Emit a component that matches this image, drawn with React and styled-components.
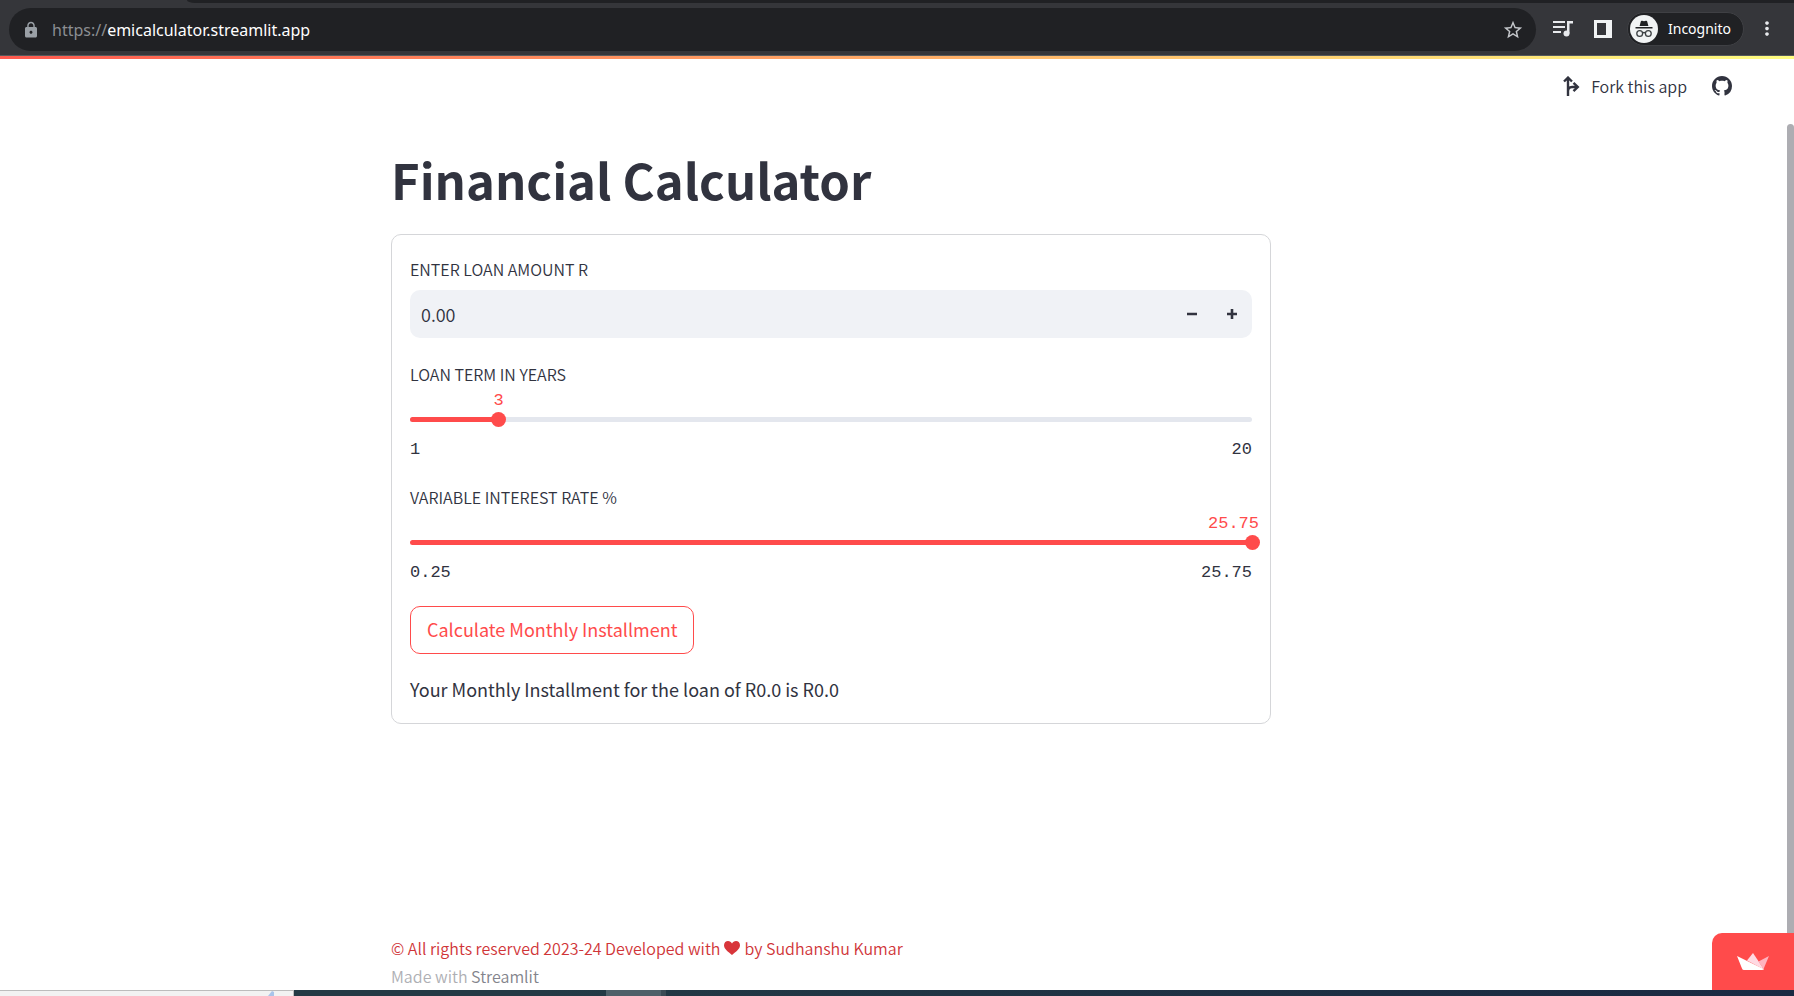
import React, { useState } from "react";
import styled, { createGlobalStyle } from "styled-components";
import { MdLock, MdStarBorder, MdMoreVert } from "react-icons/md";

const sans = `"Noto Sans CJK SC", "Noto Sans", sans-serif`;
const mono = `"Liberation Mono", monospace`;
const ui = `"Noto Sans", "Open Sans", sans-serif`;
const ink = "#31333f";
const red = "#ff4b4b";

const Global = createGlobalStyle`
  *, *::before, *::after { box-sizing: border-box; }
  body { margin: 0; background: #fff; color: ${ink}; font: 350 16px/28px ${sans}; }
  button, input { font: inherit; color: inherit; margin: 0; }
  button { cursor: pointer; }
`;

const Page = styled.div`
  min-height: 100vh;
  display: flex;
  flex-direction: column;
`;

const TabStrip = styled.div`
  height: 3px;
  background: #35363a;
  padding-left: 187px;
  &::before {
    content: "";
    display: block;
    height: 3px;
    background: #202124;
    border-bottom-left-radius: 8px 3px;
  }
`;

const Toolbar = styled.div`
  height: 53px;
  padding: 5px 16px 4px 9px;
  display: flex;
  align-items: flex-start;
  background: #35363a;
  border-bottom: 1px solid #55595b;
`;

const AddressBar = styled.div`
  flex: 1;
  height: 43px;
  padding: 0 12px 0 13px;
  display: flex;
  align-items: center;
  gap: 12px;
  border-radius: 22px;
  background: #202124;
  color: #9aa0a6;
`;

const Url = styled.div`
  flex: 1;
  font: 16px/24px ${ui};
  color: #8b8e92;
`;

const Host = styled.span`
  color: #fff;
`;

const ToolButton = styled.button`
  display: flex;
  align-items: center;
  justify-content: center;
  width: 22px;
  height: 24px;
  padding: 0;
  border: 0;
  background: none;
  color: ${(p) => p.$tone || "#e8eaed"};
`;

const Tools = styled.div`
  height: 41px;
  display: flex;
  align-items: center;
  padding-left: 16px;
`;

const PanelGap = styled.div`
  padding: 0 13px 0 18px;
  display: flex;
`;

const Incognito = styled.div`
  height: 34px;
  width: 117px;
  margin-right: 12px;
  padding: 0 2px;
  display: flex;
  align-items: center;
  gap: 10px;
  border: 1px solid #3f4044;
  border-radius: 17px;
  background: #202124;
  color: #fff;
  font: 14px/20px ${ui};
`;

const Viewport = styled.div`
  position: relative;
  flex: 1;
  display: flex;
  flex-direction: column;
`;

const Header = styled.header`
  height: 60px;
  padding: 0 62px 1px 0;
  display: flex;
  align-items: center;
  justify-content: flex-end;
  gap: 25px;
  background: linear-gradient(90deg, #ff5a4f, #fffd80) top / 100% 3px no-repeat;
`;

const HeaderLink = styled.a`
  display: flex;
  align-items: center;
  gap: 11px;
  color: ${ink};
  text-decoration: none;
`;

const Scroller = styled.div`
  flex: 1;
  display: flex;
  align-items: stretch;
`;

const ScrollTrack = styled.div`
  width: 7px;
  padding-top: 8px;
  display: flex;
`;

const ScrollThumb = styled.div`
  flex: 1;
  border-radius: 4px 4px 0 0;
  background: #adadb2;
`;

const Content = styled.div`
  flex: 1;
  display: grid;
  grid-template-columns: minmax(16px, 391fr) minmax(0, 880px) minmax(16px, 516fr);
`;

const Column = styled.main`
  grid-column: 2;
  display: flex;
  flex-direction: column;
  padding-top: 31px;
`;

const Title = styled.h1`
  margin: 0 0 23px;
  font-size: 49px;
  line-height: 64px;
  font-weight: 700;
`;

const Card = styled.form`
  display: flex;
  flex-direction: column;
  gap: 22px;
  padding: 20px 18px 19px;
  border: 1px solid #d5d6d9;
  border-radius: 10px;
`;

const Field = styled.div`
  display: flex;
  flex-direction: column;
`;

const Label = styled.label`
  line-height: 28px;
`;

const NumberBox = styled.div`
  display: flex;
  height: 48px;
  margin-top: 7px;
  border-radius: 10px;
  overflow: hidden;
  background: #f0f2f6;
`;

const NumberInput = styled.input`
  flex: 1;
  min-width: 0;
  padding: 0 11px;
  border: 0;
  outline: 0;
  background: none;
  font-size: 18px;
`;

const StepButton = styled.button`
  width: 40px;
  padding: 0;
  border: 0;
  background: none;
  display: flex;
  align-items: center;
  justify-content: center;
`;

const ValueRow = styled.div`
  position: relative;
  height: 24px;
  font: 17px/26px ${mono};
`;

const Value = styled.output`
  position: absolute;
  top: 0;
  transform: translateX(-50%);
  color: ${red};
`;

const Rail = styled.div`
  display: grid;
  align-items: center;
  height: 15px;
`;

const RailLine = styled.div`
  grid-area: 1 / 1;
  height: 5px;
  border-radius: 3px;
  background: #e4e7ee;
  overflow: hidden;
`;

const RailFill = styled.div`
  height: 5px;
  background: ${red};
`;

const Range = styled.input`
  grid-area: 1 / 1;
  appearance: none;
  width: calc(100% + 16px);
  height: 15px;
  margin: 0 -8px;
  background: none;
  outline: 0;
  &::-webkit-slider-thumb {
    appearance: none;
    width: 15px;
    height: 15px;
    border-radius: 50%;
    background: ${red};
  }
`;

const Bounds = styled.div`
  display: flex;
  justify-content: space-between;
  margin-top: 12px;
  font: 17px/22px ${mono};
`;

const Submit = styled.button`
  align-self: flex-start;
  height: 48px;
  padding: 0 16px 2px;
  border: 1px solid ${red};
  border-radius: 10px;
  background: #fff;
  color: ${red};
  font-size: 18px;
  font-weight: 400;
`;

const Result = styled.p`
  margin: 0;
  padding-bottom: 2px;
  font-size: 18px;
  font-weight: 400;
  line-height: 26px;
`;

const Footer = styled.footer`
  margin-top: auto;
  color: #aeafb4;
`;

const Rights = styled.div`
  color: #d03538;
  display: flex;
  align-items: center;
  gap: 4px;
`;

const FooterLink = styled.a`
  color: #83848c;
  text-decoration: none;
`;

const Badge = styled.a`
  position: absolute;
  right: 0;
  bottom: 0;
  width: 82px;
  height: 57px;
  display: flex;
  align-items: center;
  justify-content: center;
  border-top-left-radius: 10px;
  background: ${red};
`;

const Taskbar = styled.div`
  height: 6px;
  display: flex;
  background: linear-gradient(90deg, #233a45 30%, #1a2942);
`;

const TaskSearch = styled.div`
  width: 294px;
  border-top: 1px solid #bcbcbc;
  border-right: 1px solid #bcbcbc;
  background: #f2f2f2;
  display: flex;
  justify-content: flex-end;
  padding-right: 19px;
`;

const TaskActive = styled.div`
  width: 60px;
  margin-left: 312px;
  background: #4e6069;
  border-right: 5px solid #3a4b55;
`;

function SliderField({ id, label, min, max, step, initial, format }) {
  const [value, setValue] = useState(initial);
  const pct = ((value - min) / (max - min)) * 100;
  const text = format(value);
  return (
    <Field>
      <Label htmlFor={id}>{label}</Label>
      <ValueRow>
        <Value
          htmlFor={id}
          style={{ left: `min(${pct}%, calc(100% + 7px - ${text.length / 2}ch))` }}
        >
          {text}
        </Value>
      </ValueRow>
      <Rail>
        <RailLine>
          <RailFill style={{ width: `${pct}%` }} />
        </RailLine>
        <Range
          id={id}
          type="range"
          min={min}
          max={max}
          step={step}
          value={value}
          onChange={(e) => setValue(Number(e.target.value))}
        />
      </Rail>
      <Bounds>
        <span>{format(min)}</span>
        <span>{format(max)}</span>
      </Bounds>
    </Field>
  );
}

const IncognitoIcon = () => (
  <svg width="28" height="28" viewBox="0 0 28 28" aria-hidden="true">
    <circle cx="14" cy="14" r="14" fill="#f1f3f4" />
    <path d="M9.6 11 10.8 6.4q.3-1 1.3-.7l1.9.5 1.9-.5q1-.3 1.3.7L18.4 11z" fill="#202124" />
    <path d="M5.5 12h17v1.5h-17z" fill="#202124" />
    <g fill="none" stroke="#3c4043" strokeWidth="1.3">
      <circle cx="9.7" cy="18.5" r="2.9" />
      <circle cx="18.3" cy="18.5" r="2.9" />
      <path d="M12.6 18q1.4-1 2.8 0" />
    </g>
  </svg>
);

const QueueIcon = () => (
  <svg width="20" height="16" viewBox="0 0 20 16" fill="#e8eaed" aria-hidden="true">
    <path d="M0 0h12v2H0zM0 5h12v2H0zM0 10h8v2H0zM14 0h6v2.4h-3.5V12.5H14z" />
    <circle cx="13.5" cy="12.5" r="3" />
  </svg>
);

const PanelIcon = () => (
  <svg width="18" height="18" viewBox="0 0 18 18" aria-hidden="true">
    <path d="M0 0h18v18H0zM3 3v12h9V3z" fill="#f1f3f4" fillRule="evenodd" />
  </svg>
);

const ForkIcon = () => (
  <svg width="17" height="20" viewBox="0 0 17 20" fill="none" stroke={ink} strokeWidth="2.4" aria-hidden="true">
    <path d="M5 20V2M1 5.5 5 1.6 9 5.5M5 15.5Q5 11 9 11h5.5M10.5 6.8 14.8 11l-4.3 4.2" />
  </svg>
);

const GithubIcon = () => (
  <svg width="20" height="20" viewBox="0 0 16 16" fill={ink} aria-hidden="true">
    <path d="M8 0C3.58 0 0 3.58 0 8c0 3.54 2.29 6.53 5.47 7.59.4.07.55-.17.55-.38 0-.19-.01-.82-.01-1.49-2.01.37-2.53-.49-2.69-.94-.09-.23-.48-.94-.82-1.13-.28-.15-.68-.52-.01-.53.63-.01 1.08.58 1.23.82.72 1.21 1.87.87 2.33.66.07-.52.28-.87.51-1.07-1.78-.2-3.64-.89-3.64-3.95 0-.87.31-1.59.82-2.15-.08-.2-.36-1.02.08-2.12 0 0 .67-.21 2.2.82.64-.18 1.32-.27 2-.27s1.36.09 2 .27c1.53-1.04 2.2-.82 2.2-.82.44 1.1.16 1.92.08 2.12.51.56.82 1.27.82 2.15 0 3.07-1.87 3.75-3.65 3.95.29.25.54.73.54 1.48 0 1.07-.01 1.93-.01 2.2 0 .21.15.46.55.38A8.01 8.01 0 0 0 16 8c0-4.42-3.58-8-8-8z" />
  </svg>
);

const CrownIcon = () => (
  <svg width="32" height="18" viewBox="0 0 32 18" aria-hidden="true">
    <path d="M16 0 22 9 27 16.5 10 7.5z" fill="#ffd9e2" />
    <path d="M32 3 26.5 16 21.5 8.5z" fill="#ffb3bf" />
    <path d="M0 3 27 16.3Q26 17 25 17H7q-1.5 0-2-1.5z" fill="#fff" />
  </svg>
);

const HeartIcon = () => (
  <svg width="16" height="14" viewBox="0 0 16 14" aria-hidden="true">
    <path d="M8 14C4 10.5 0 8 0 4.2 0 1.6 2 0 4 0c1.8 0 3.2 1 4 2.4C8.8 1 10.2 0 12 0c2 0 4 1.6 4 4.2C16 8 12 10.5 8 14z" fill="#d8353a" />
  </svg>
);

export default function App() {
  const [amount, setAmount] = useState("0.00");
  const step = (d) => setAmount(Math.max(0, Number(amount) + d).toFixed(2));
  return (
    <Page>
      <Global />
      <TabStrip />
      <Toolbar>
        <AddressBar>
          <MdLock size={18} />
          <Url>
            https://<Host>emicalculator.streamlit.app</Host>
          </Url>
          <ToolButton aria-label="Bookmark" $tone="#c4c7cb">
            <MdStarBorder size={22} />
          </ToolButton>
        </AddressBar>
        <Tools>
          <ToolButton aria-label="Media"><QueueIcon /></ToolButton>
          <PanelGap>
            <ToolButton aria-label="Side panel"><PanelIcon /></ToolButton>
          </PanelGap>
          <Incognito>
            <IncognitoIcon />
            Incognito
          </Incognito>
          <ToolButton aria-label="Menu"><MdMoreVert size={25} /></ToolButton>
        </Tools>
      </Toolbar>
      <Viewport>
        <Header>
          <HeaderLink href="#fork">
            <ForkIcon />
            Fork this app
          </HeaderLink>
          <HeaderLink href="#github" aria-label="GitHub">
            <GithubIcon />
          </HeaderLink>
        </Header>
        <Scroller>
          <Content>
            <Column>
              <Title>Financial Calculator</Title>
              <Card onSubmit={(e) => e.preventDefault()}>
                <Field>
                  <Label htmlFor="amount">ENTER LOAN AMOUNT R</Label>
                  <NumberBox>
                    <NumberInput
                      id="amount"
                      inputMode="decimal"
                      value={amount}
                      onChange={(e) => setAmount(e.target.value)}
                    />
                    <StepButton type="button" aria-label="Decrease" onClick={() => step(-1)}>
                      <svg width="10" height="10" viewBox="0 0 10 10"><path d="M0 5h10" stroke={ink} strokeWidth="2.6" /></svg>
                    </StepButton>
                    <StepButton type="button" aria-label="Increase" onClick={() => step(1)}>
                      <svg width="10" height="10" viewBox="0 0 10 10"><path d="M0 5h10M5 0v10" stroke={ink} strokeWidth="2.6" /></svg>
                    </StepButton>
                  </NumberBox>
                </Field>
                <SliderField id="term" label="LOAN TERM IN YEARS" min={1} max={20} step={1} initial={3} format={(v) => String(v)} />
                <SliderField id="rate" label="VARIABLE INTEREST RATE %" min={0.25} max={25.75} step={0.25} initial={25.75} format={(v) => v.toFixed(2)} />
                <Submit type="submit">Calculate Monthly Installment</Submit>
                <Result>Your Monthly Installment for the loan of R0.0 is R0.0</Result>
              </Card>
              <Footer>
                <Rights>
                  <span>© All rights reserved 2023-24 Developed with</span>
                  <HeartIcon />
                  <span>by Sudhanshu Kumar</span>
                </Rights>
                <div>
                  Made with <FooterLink href="#streamlit">Streamlit</FooterLink>
                </div>
              </Footer>
            </Column>
          </Content>
          <ScrollTrack>
            <ScrollThumb />
          </ScrollTrack>
        </Scroller>
        <Badge href="#hosted" aria-label="Hosted with Streamlit">
          <CrownIcon />
        </Badge>
      </Viewport>
      <Taskbar>
        <TaskSearch>
          <svg width="6" height="5" viewBox="0 0 6 5" aria-hidden="true"><path d="M0 5 4 0l2 1v4z" fill="#a9c4ea" /></svg>
        </TaskSearch>
        <TaskActive />
      </Taskbar>
    </Page>
  );
}
